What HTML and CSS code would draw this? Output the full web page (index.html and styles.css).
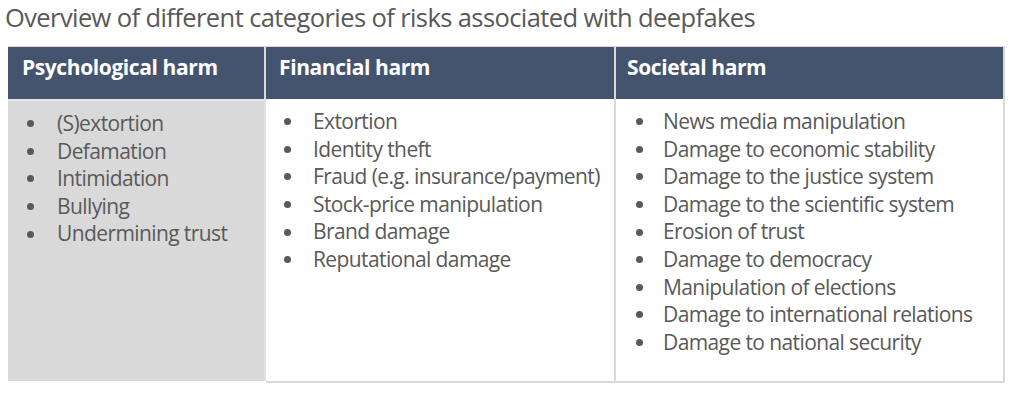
FILE: index.html
```html
<!DOCTYPE html>
<html lang="en">
<head>
<meta charset="utf-8">
<title>Deepfake risks</title>
<link rel="stylesheet" href="styles.css">
</head>
<body>
<h1 class="title">Overview of different categories of risks associated with deepfakes</h1>
<div class="table">
  <div class="col col-psy">
    <div class="head">Psychological harm</div>
    <ul class="list">
      <li>(S)extortion</li>
      <li>Defamation</li>
      <li>Intimidation</li>
      <li>Bullying</li>
      <li>Undermining trust</li>
    </ul>
  </div>
  <div class="col col-fin">
    <div class="head">Financial harm</div>
    <ul class="list">
      <li>Extortion</li>
      <li>Identity theft</li>
      <li>Fraud (e.g. insurance/payment)</li>
      <li>Stock-price manipulation</li>
      <li>Brand damage</li>
      <li>Reputational damage</li>
    </ul>
  </div>
  <div class="col col-soc">
    <div class="head">Societal harm</div>
    <ul class="list">
      <li>News media manipulation</li>
      <li>Damage to economic stability</li>
      <li>Damage to the justice system</li>
      <li>Damage to the scientific system</li>
      <li>Erosion of trust</li>
      <li>Damage to democracy</li>
      <li>Manipulation of elections</li>
      <li>Damage to international relations</li>
      <li>Damage to national security</li>
    </ul>
  </div>
</div>
</body>
</html>
```

FILE: styles.css
```css
* { box-sizing: border-box; }
html, body { margin: 0; padding: 0; background: #ffffff; }
body {
  font-family: "Open Sans", "Liberation Sans", sans-serif;
  color: #595959;
  width: 1024px;
  height: 406px;
  overflow: hidden;
}
.title {
  margin: 0;
  padding: 1px 0 0 5px;
  height: 46px;
  font-size: 25.5px;
  font-weight: 400;
  letter-spacing: -0.6px;
  line-height: 32px;
  color: #595959;
  white-space: nowrap;
}
.table {
  display: grid;
  grid-template-columns: 258px 350px 389px;
  margin-left: 8px;
  width: 997px;
  height: 337px;
}
.col {
  display: flex;
  flex-direction: column;
}
.head {
  height: 53px;
  background: #44546f;
  color: #ffffff;
  font-weight: 700;
  font-size: 21px;
  letter-spacing: -0.4px;
  line-height: 28px;
  padding: 6px 0 0 14px;
  border-top: 1px solid #d9d9d9;
  border-right: 2px solid #d9d9d9;
}
.col-fin .head { padding-left: 13px; }
.col-soc .head { padding-left: 11px; }
.list {
  flex: 1;
  margin: 0;
  list-style: none;
  padding: 9px 0 0 0;
  font-size: 21px;
  letter-spacing: -0.6px;
  line-height: 27.6px;
  white-space: nowrap;
}
.list li {
  display: flex;
  align-items: center;
}
.list li::before {
  content: "";
  width: 7px;
  height: 7px;
  border-radius: 50%;
  background: #595959;
  flex: none;
}
.col-psy .list {
  background: #d9d9d9;
  border-top: 2px solid #e6e6e6;
  border-right: 2px solid #e0e0e0;
  padding-left: 19px;
  margin-bottom: 2px;
}
.col-psy .list li::before { margin-right: 23px; }
.col-fin .list {
  padding-left: 18px;
  border-right: 2px solid #d9d9d9;
  border-bottom: 2px solid #d9d9d9;
}
.col-fin .list li::before { margin-right: 22px; }
.col-soc .list {
  padding-left: 20px;
  border-right: 2px solid #d9d9d9;
  border-bottom: 2px solid #d9d9d9;
}
.col-soc .list li::before { margin-right: 20px; }
```
